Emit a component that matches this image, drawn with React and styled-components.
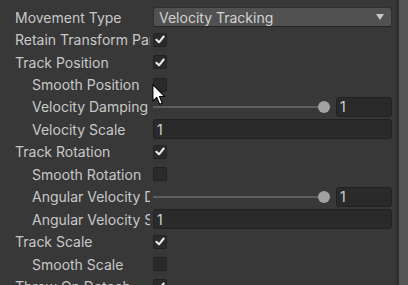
import React from 'react';
import styled, { createGlobalStyle } from 'styled-components';

const GlobalStyle = createGlobalStyle`
  html, body {
    margin: 0;
    padding: 0;
    background: #383838;
    overflow: hidden;
  }
  body {
    font-family: Inter, 'Noto Sans', sans-serif;
  }
`;

const Page = styled.div`
  position: relative;
  display: flex;
  width: 408px;
  height: 285px;
  background: #383838;
  overflow: hidden;
`;

const Inspector = styled.div`
  flex: 1;
  padding: 6px 4px 0 15px;
  display: flex;
  flex-direction: column;
`;

const Gutter = styled.div`
  width: 9px;
  border-left: 3px solid #2f2f2f;
  background: #555555;
`;

const Row = styled.div`
  display: grid;
  grid-template-columns: 135px 1fr;
  column-gap: 3px;
  height: 22.45px;
  flex-shrink: 0;
  align-items: center;
`;

const Label = styled.div`
  padding-left: ${(p) => (p.$indent ? 17 : 0)}px;
  color: #c8c8c8;
  font-size: 14px;
  white-space: nowrap;
  overflow: hidden;
  text-overflow: clip;
`;

const Dropdown = styled.div`
  height: 18px;
  display: flex;
  align-items: center;
  justify-content: space-between;
  padding: 0 7px 0 5px;
  background: #515151;
  border: 1px solid #303030;
  border-bottom-color: #242424;
  border-radius: 3px;
  color: #d2d2d2;
  font-size: 14px;
`;

const Arrow = styled.span`
  width: 0;
  height: 0;
  border-left: 4px solid transparent;
  border-right: 4px solid transparent;
  border-top: 6px solid #c8c8c8;
`;

const Box = styled.div`
  width: 14px;
  height: 14px;
  box-sizing: border-box;
  background: #2a2a2a;
  border: 1px solid #232323;
  border-radius: 2px;
  display: flex;
  align-items: center;
  justify-content: center;
`;

const SliderWrap = styled.div`
  display: flex;
  align-items: center;
  gap: 6px;
`;

const Track = styled.div`
  position: relative;
  flex: 1;
  height: 2px;
  background: #5e5e5e;
  margin-right: 6px;
`;

const Knob = styled.div`
  position: absolute;
  right: -6px;
  top: -5px;
  width: 12px;
  height: 12px;
  border-radius: 50%;
  background: #a2a2a2;
`;

const NumberField = styled.div`
  width: ${(p) => (p.$small ? '56px' : 'auto')};
  height: 20px;
  box-sizing: border-box;
  display: flex;
  align-items: center;
  padding-left: 3px;
  background: #2a2a2a;
  border: 1px solid #212121;
  border-radius: 3px;
  color: #d2d2d2;
  font-size: 14px;
`;

const Cursor = styled.svg`
  position: absolute;
  left: 152px;
  top: 84px;
`;

const Check = ({ on }) => (
  <Box>
    {on && (
      <svg width="10" height="9" viewBox="0 0 10 9">
        <path d="M1.4 4.8 L4 7.3 L8.7 1.5" fill="none" stroke="#ececec" strokeWidth="2" strokeLinecap="round" strokeLinejoin="round" />
      </svg>
    )}
  </Box>
);

const Slider = ({ value }) => (
  <SliderWrap>
    <Track>
      <Knob />
    </Track>
    <NumberField $small>{value}</NumberField>
  </SliderWrap>
);

const rows = [
  { label: 'Movement Type', field: 'dropdown', value: 'Velocity Tracking' },
  { label: 'Retain Transform Parent', field: 'check', on: true },
  { label: 'Track Position', field: 'check', on: true },
  { label: 'Smooth Position', indent: true, field: 'check', on: false },
  { label: 'Velocity Damping', indent: true, field: 'slider', value: '1' },
  { label: 'Velocity Scale', indent: true, field: 'number', value: '1' },
  { label: 'Track Rotation', field: 'check', on: true },
  { label: 'Smooth Rotation', indent: true, field: 'check', on: false },
  { label: 'Angular Velocity Damping', indent: true, field: 'slider', value: '1' },
  { label: 'Angular Velocity Scale', indent: true, field: 'number', value: '1' },
  { label: 'Track Scale', field: 'check', on: true },
  { label: 'Smooth Scale', indent: true, field: 'check', on: false },
  { label: 'Throw On Detach', field: 'check', on: true },
];

const renderField = (row) => {
  if (row.field === 'dropdown')
    return (
      <Dropdown>
        <span>{row.value}</span>
        <Arrow />
      </Dropdown>
    );
  if (row.field === 'check') return <Check on={row.on} />;
  if (row.field === 'slider') return <Slider value={row.value} />;
  return <NumberField>{row.value}</NumberField>;
};

export default function App() {
  return (
    <Page>
      <GlobalStyle />
      <Inspector>
        {rows.map((row) => (
          <Row key={row.label}>
            <Label $indent={row.indent}>{row.label}</Label>
            {renderField(row)}
          </Row>
        ))}
      </Inspector>
      <Gutter />
      <Cursor width="15" height="22" viewBox="0 0 13 20">
        <path d="M0.5 0.5 L0.5 15.5 L4 12.2 L6.6 18.4 L9 17.4 L6.5 11.4 L11.3 11.4 Z" fill="#ffffff" stroke="#000000" strokeWidth="1" strokeLinejoin="round" />
      </Cursor>
    </Page>
  );
}
